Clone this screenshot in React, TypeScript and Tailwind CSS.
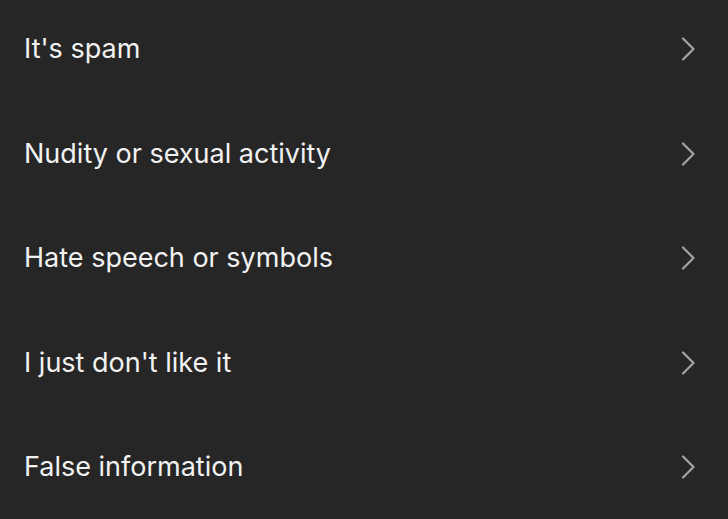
import React from "react";

const items = [
  "It's spam",
  "Nudity or sexual activity",
  "Hate speech or symbols",
  "I just don't like it",
  "False information",
];

function Chevron() {
  return (
    <svg width="15" height="24" viewBox="0 0 15 24" fill="none">
      <path d="M2 1.5 L12.5 12 L2 22.5" stroke="#a3a3a3" strokeWidth="2.2" strokeLinecap="round" strokeLinejoin="round" />
    </svg>
  );
}

export default function App() {
  return (
    <div className="w-[728px] h-[519px] overflow-hidden bg-[#262626] text-[#f2f2f2]" style={{ fontFamily: "Inter, 'Liberation Sans', sans-serif" }}>
      <div className="-mt-[3px] flex flex-col">
        {items.map((t) => (
          <div key={t} className="h-[104.5px] flex items-center justify-between pl-6 pr-[32px]">
            <span className="text-[27px] tracking-[0px]">{t}</span>
            <Chevron />
          </div>
        ))}
      </div>
    </div>
  );
}
